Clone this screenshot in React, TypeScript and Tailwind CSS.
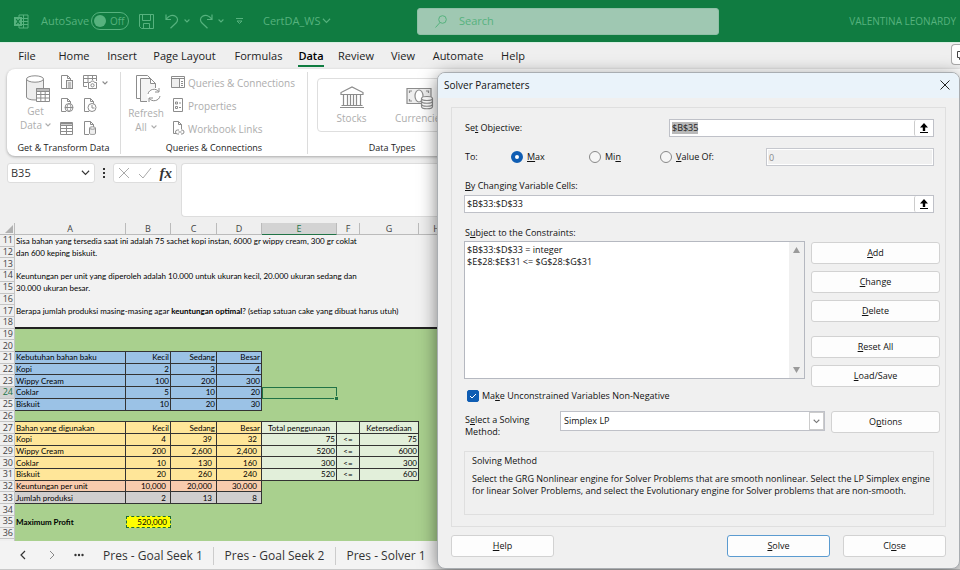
import React from 'react';
import { clsx } from 'clsx';

const MENU = [
    { name: 'File', cls: 'w-[36px]' },
    { name: 'Home', cls: 'w-[58px]' },
    { name: 'Insert', cls: 'w-[38px]' },
    { name: 'Page Layout', cls: 'w-[87px]' },
    { name: 'Formulas', cls: 'w-[61px]' },
    { name: 'Data', cls: 'w-[44px]' },
    { name: 'Review', cls: 'w-[46px]' },
    { name: 'View', cls: 'w-[48px]' },
    { name: 'Automate', cls: 'w-[62px]' },
    { name: 'Help', cls: 'w-[48px]' },
];

const COLUMNS = [
    { name: 'A', cls: 'w-[111px]' },
    { name: 'B', cls: 'w-[45px]' },
    { name: 'C', cls: 'w-[46px]' },
    { name: 'D', cls: 'w-[45px]' },
    { name: 'E', cls: 'w-[75px]' },
    { name: 'F', cls: 'w-[23px]' },
    { name: 'G', cls: 'w-[59px]' },
    { name: 'H', cls: 'w-[36px]' },
    { name: '', cls: '' },
];

const NOTES: Record<number, React.ReactNode> = {
    11: 'Sisa bahan yang tersedia saat ini adalah 75 sachet kopi instan, 6000 gr wippy cream, 300 gr coklat',
    12: 'dan 600 keping biskuit.',
    14: 'Keuntungan per unit yang diperoleh adalah 10.000 untuk ukuran kecil, 20.000 ukuran sedang dan',
    15: '30.000 ukuran besar.',
    17: <>Berapa jumlah produksi masing-masing agar <b>keuntungan optimal</b>? (setiap satuan cake yang dibuat harus utuh)</>,
};

const DATA: Record<number, string[]> = {
    21: ['Kebutuhan bahan baku', 'Kecil', 'Sedang', 'Besar'],
    22: ['Kopi', '2', '3', '4'],
    23: ['Wippy Cream', '100', '200', '300'],
    24: ['Coklar', '5', '10', '20'],
    25: ['Biskuit', '10', '20', '30'],
    27: ['Bahan yang digunakan', 'Kecil', 'Sedang', 'Besar', 'Total penggunaan', '', 'Ketersediaan'],
    28: ['Kopi', '4', '39', '32', '75', '<=', '75'],
    29: ['Wippy Cream', '200', '2,600', '2,400', '5200', '<=', '6000'],
    30: ['Coklar', '10', '130', '160', '300', '<=', '300'],
    31: ['Biskuit', '20', '260', '240', '520', '<=', '600'],
    32: ['Keuntungan per unit', '10,000', '20,000', '30,000'],
    33: ['Jumlah produksi', '2', '13', '8'],
};

const ROWS = Array.from({ length: 27 }, (_, i) => i + 11);

const rowColor = (row: number) => {
    if (row <= 25) return 'bg-[#9bc2e6]';
    if (row <= 31) return 'bg-[#ffe699]';
    return row === 32 ? 'bg-[#f8cbad]' : 'bg-[#d0cece]';
};

const Chevron = ({ className }: { className?: string }) => (
    <svg viewBox="0 0 10 6" className={className} fill="none" stroke="currentColor">
        <path d="M1 .500l4 4 4-4" vectorEffect="non-scaling-stroke" strokeWidth="1.100" />
    </svg>
);

/* "&" marks the access key, which is drawn underlined */
const Mnemonic = ({ text }: { text: string }) => {
    const at = text.indexOf('&');
    return (
        <span>
            {text.slice(0, at)}
            <span className="underline underline-offset-1">{text[at + 1]}</span>
            {text.slice(at + 2)}
        </span>
    );
};

const TitleBar = () => (
    <header className="h-[42px] shrink-0 bg-[#107c41] text-[#56b27e] flex items-center text-[11px]">
        <div className="flex items-center w-[417px] shrink-0 pl-[14px]">
            <svg className="w-[15px] h-[15px] shrink-0" viewBox="0 0 15 15" fill="none" stroke="currentColor">
                <path d="M5 3V1h9v13H5v-2M9.500 1v13M5 4.500h9M7 7.500h7M7 10.500h7" />
                <rect x="0" y="3" width="8" height="9" fill="currentColor" stroke="none" />
                <path d="M2.200 5l3.600 5M5.800 5L2.200 10" stroke="#107c41" strokeWidth="1.200" />
            </svg>
            <span id="autosave" className="ml-3 w-[50px]">AutoSave</span>
            <button role="switch" aria-checked="false" aria-labelledby="autosave" className="w-[38px] h-[18px] rounded-full border border-[#56b27e] flex items-center pl-[2px] text-[10px]">
                <span className="w-3 h-3 rounded-full bg-[#56b27e] mr-1" />
                Off
            </button>
            <button aria-label="Save" className="ml-[10px]">
                <svg className="w-[15px] h-[15px]" viewBox="0 0 15 15" fill="none" stroke="currentColor">
                    <path d="M.500.500h14v14h-12l-2-2zM3.500.500v6h8v-6M4.500 14.500v-5h6v5" />
                </svg>
            </button>
            <button aria-label="Undo" className="ml-[11px] flex items-center gap-[5px]">
                <svg className="w-[14px] h-[15px]" viewBox="0 0 14 15" fill="none" stroke="currentColor" strokeWidth="1.200">
                    <path d="M1 .500v5h5M1 5.500C4 1 8 .800 10.500 2.300 13.200 4 13 7 11 9l-5.500 5.300" />
                </svg>
                <Chevron className="w-[6px] h-[4px]" />
            </button>
            <button aria-label="Redo" className="ml-[9px] flex items-center gap-[5px]">
                <svg className="w-[14px] h-[15px]" viewBox="0 0 14 15" fill="none" stroke="currentColor" strokeWidth="1.200">
                    <path d="M13 .500v5H8M13 5.500C10 1 6 .800 3.500 2.300.800 4 1 7 3 9l5.500 5.300" />
                </svg>
                <Chevron className="w-[6px] h-[4px]" />
            </button>
            <button aria-label="Customize Quick Access Toolbar" className="ml-[12px]">
                <svg className="w-[7px] h-[7px]" viewBox="0 0 7 7" fill="none" stroke="currentColor">
                    <path d="M0 .500h7M1 3l2.500 2.500L6 3z" />
                </svg>
            </button>
            <button className="ml-[20px] flex items-center gap-[2px]">
                CertDA_WS
                <Chevron className="w-[9px] h-[6px]" />
            </button>
        </div>
        <label className="flex items-center w-[302px] h-[27px] bg-[#9fc8b2] rounded-[3px] border border-[#8fc0a6] pl-[17px]">
            <svg className="w-[12px] h-[13px]" viewBox="0 0 12 13" fill="none" stroke="currentColor">
                <circle cx="7.500" cy="4.500" r="3.800" />
                <path d="M5 7.500L.500 12.500" />
            </svg>
            <input aria-label="Search" placeholder="Search" className="flex-1 min-w-0 ml-[12px] bg-transparent outline-none placeholder:text-[#56b27e]" />
        </label>
        <span className="ml-auto pr-[4px] text-[10px] whitespace-nowrap">VALENTINA LEONARDY</span>
    </header>
);

const MenuTabs = () => (
    <nav className="h-[27px] shrink-0 flex items-start bg-[#efefef] border-t border-[#d9efe3] pl-[9px] text-[11px] leading-[16px] text-[#222]">
        {MENU.map((m) => (
            <button key={m.name} className={clsx(m.cls, 'shrink-0 pt-[5px] flex justify-center whitespace-nowrap')}>
                <span className={clsx('pb-px border-b-2', m.name === 'Data' ? 'border-[#107c41] font-semibold text-black' : 'border-transparent')}>
                    {m.name}
                </span>
            </button>
        ))}
        <button aria-label="Comments" className="ml-auto mt-px w-[9px] h-[21px] shrink-0 bg-white border border-r-0 border-[#aaa] rounded-l-[4px] pl-[5px] overflow-hidden">
            <svg className="w-[10px] h-[10px]" viewBox="0 0 10 10" fill="none" stroke="#444">
                <path d="M.500 1.500h9v6h-5l-2 2v-2h-2z" />
            </svg>
        </button>
    </nav>
);

const PAGE = 'M1.500.500h6l3 3v4M7.500.500v3h3M6 13.500H1.500V.500';

const GetDataIcons = () => (
    <div className="grid grid-cols-[15px_26px] gap-x-2 gap-y-[8px] text-[#8c8c8c]">
        <button aria-label="From Text/CSV">
            <svg className="w-[15px] h-[15px]" viewBox="0 0 15 15" fill="none" stroke="currentColor">
                <path d={PAGE} />
                <rect x="6.500" y="5.500" width="6" height="8" fill="#eee" />
                <path d="M8 8h3M8 10h3M8 12h3" />
            </svg>
        </button>
        <button aria-label="From Picture" className="flex items-center gap-[4px]">
            <svg className="w-[15px] h-[15px] shrink-0" viewBox="0 0 15 15" fill="none" stroke="currentColor">
                <path d="M4 11.500H.500v-11h13V6M.500 3.500h13M.500 7.500H5M5 .500V7M9.500.500V5" />
                <path d="M5.500 7.500h2l1-1.500h2l1 1.500h2v6h-8z" fill="#fff" />
                <circle cx="9.500" cy="10.300" r="1.600" />
            </svg>
            <Chevron className="w-[6px] h-[4px] shrink-0" />
        </button>
        <button aria-label="From Web">
            <svg className="w-[15px] h-[15px]" viewBox="0 0 15 15" fill="none" stroke="currentColor">
                <path d={PAGE} />
                <circle cx="9" cy="9.500" r="4" fill="#fff" />
                <path d="M5 9.500h8M9 5.500c-2.500 2-2.500 6 0 8M9 5.500c2.500 2 2.500 6 0 8" />
            </svg>
        </button>
        <button aria-label="Recent Sources">
            <svg className="w-[15px] h-[15px]" viewBox="0 0 15 15" fill="none" stroke="currentColor">
                <path d={PAGE} />
                <circle cx="9" cy="9.500" r="4" fill="#fff" />
                <path d="M9 7v3h2.500" />
            </svg>
        </button>
        <button aria-label="From Table">
            <svg className="w-[15px] h-[15px]" viewBox="0 0 15 15" fill="none" stroke="currentColor">
                <path d="M.500 1.500h12v12H.500zM.500 7.500h12M.500 10.500h12M6.500 4.500v9" />
                <path d="M.500 2.500h12v2H.500z" fill="#ccc" />
            </svg>
        </button>
        <button aria-label="Existing Connections">
            <svg className="w-[15px] h-[15px]" viewBox="0 0 15 15" fill="none" stroke="currentColor">
                <path d={PAGE} />
                <path d="M6.500 7v5.500c0 1.300 6 1.300 6 0V7" fill="#eee" />
                <ellipse cx="9.500" cy="7" rx="3" ry="1.200" fill="#fff" />
            </svg>
        </button>
    </div>
);

const Ribbon = () => (
    <section className="ml-[7px] shrink-0 h-[87px] bg-white rounded-l-lg shadow-[0_1px_3px_rgba(0,0,0,0.3)] flex text-[10px] leading-[14px] text-[#adadad]">
        <div className="w-[114px] shrink-0 mt-[3px] mb-[2px] border-r border-[#dcdcdc] flex flex-col justify-between">
            <div className="flex pl-[12px] pt-[3px]">
                <button className="w-[33px] mr-[8px] whitespace-nowrap flex flex-col items-center">
                    <svg className="w-[26px] h-[28px] ml-[4px]" viewBox="0 0 26 28" fill="none" stroke="#8c8c8c">
                        <path d="M1.500 4v18c0 4 17 4 17 0V4" fill="#eee" />
                        <ellipse cx="10" cy="4" rx="8.500" ry="3.200" fill="#fff" />
                        <path d="M11.500 13.500h13v13h-13z" fill="#fff" />
                        <path d="M11.500 13.500h13v3h-13z" fill="#bbb" />
                        <path d="M11.500 19.500h13M11.500 23h13M15.800 16v10.500M20.200 16v10.500" />
                    </svg>
                    <span className="mt-px">Get</span>
                    <span className="flex items-center gap-[3px]">Data <Chevron className="w-[6px] h-[4px]" /></span>
                </button>
                <GetDataIcons />
            </div>
            <span className="text-center text-[9px] leading-[12px] text-[#222]">Get &amp; Transform Data</span>
        </div>
        <div className="w-[187px] shrink-0 mt-[3px] mb-[2px] border-r border-[#dcdcdc] flex flex-col justify-between">
            <div className="flex pl-[8px] pt-[3px]">
                <button className="w-[34px] flex flex-col items-center">
                    <svg className="w-[26px] h-[28px] ml-[3px]" viewBox="0 0 26 28" fill="none" stroke="#8c8c8c">
                        <path d="M5 23.500H1.500V.500h11l4 4" />
                        <path d="M12 26.500H5.500v-23h10l5 5V13M15.500 3.500v5h5" fill="#f4f4f4" />
                        <circle cx="19" cy="20" r="7" fill="#fff" stroke="none" />
                        <path d="M13 19c.800-5 8-6.500 11-2.200V13M24 17h-4M25 21c-.800 5-8 6.500-11 2.200V27M14 23h4" />
                    </svg>
                    <span className="mt-[3px]">Refresh</span>
                    <span className="flex items-center gap-[4px]">All <Chevron className="w-[6px] h-[4px]" /></span>
                </button>
                <div className="ml-[8px] flex flex-col gap-[8px] items-start whitespace-nowrap">
                    <button className="flex items-center gap-[3px]">
                        <svg className="w-[14px] h-[15px]" viewBox="0 0 14 15" fill="none" stroke="#8c8c8c">
                            <path d="M1 4h7v8H1z" fill="#eee" stroke="none" />
                            <path d="M.500 1.500h13v11H.500zM.500 3.500h13M8.500 3.500v9M10 6.500h2M10 8.500h2M10 10.500h2" />
                        </svg>
                        Queries &amp; Connections
                    </button>
                    <button className="flex items-center gap-[3px]">
                        <svg className="w-[14px] h-[15px]" viewBox="0 0 14 15" fill="none" stroke="#8c8c8c">
                            <path d="M2.500.500h9v13h-9zM8 5h2M8 9.500h2" />
                            <path d="M4.500 4h2v2h-2zM4.500 8.500h2v2h-2z" />
                        </svg>
                        Properties
                    </button>
                    <button className="flex items-center gap-[3px]">
                        <svg className="w-[14px] h-[15px]" viewBox="0 0 14 15" fill="none" stroke="#8c8c8c">
                            <path d="M5 12.500H2.500V.500h5l3 3V8M7.500.500v3h3" />
                            <path d="M8 13H6.500a2 2 0 010-4H8M10 9h1a2 2 0 010 4h-1M7.500 11h3" />
                        </svg>
                        Workbook Links
                    </button>
                </div>
            </div>
            <span className="text-center text-[9px] leading-[12px] text-[#222]">Queries &amp; Connections</span>
        </div>
        <div className="w-[168px] shrink-0 mt-[3px] mb-[2px] flex flex-col justify-between">
            <div className="ml-[9px] mt-[6px] h-[54px] border border-[#dedede] rounded-[4px] flex pt-[7px]">
                <button className="w-[67px] flex flex-col items-center">
                    <svg className="w-[26px] h-[24px] mb-px" viewBox="0 0 26 24" fill="none" stroke="#8c8c8c" strokeWidth="1.200">
                        <path d="M2 8.500v-2l11-5.500 11 5.500v2zM4.500 8.500v11M8.500 8.500v11M11.500 8.500v11M14.500 8.500v11M17.500 8.500v11M21.500 8.500v11M2.500 19.500h21M1 21.500h24" />
                    </svg>
                    Stocks
                </button>
                <button className="w-[70px] flex flex-col items-center whitespace-nowrap">
                    <svg className="w-[28px] h-[24px] mb-px" viewBox="0 0 28 24" fill="none" stroke="#8c8c8c" strokeWidth="1.200">
                        <path d="M1 2.500h24v15H1z" fill="#eee" />
                        <path d="M3.500 7V5H6M3.500 13v2H6M22.500 7V5H20" />
                        <ellipse cx="13" cy="10" rx="4" ry="6" fill="#fff" />
                        <path d="M15.500 12.500v8c0 3 11 3 11 0v-8" fill="#fff" />
                        <ellipse cx="21" cy="12.500" rx="5.500" ry="2" fill="#fff" />
                        <path d="M15.500 15c0 3 11 3 11 0M15.500 18c0 3 11 3 11 0" />
                    </svg>
                    Currencies
                </button>
            </div>
            <span className="text-center text-[9px] leading-[12px] text-[#222]">Data Types</span>
        </div>
    </section>
);

const FormulaBar = () => (
    <section className="shrink-0 flex items-start pl-[7px] pt-[7px] h-[67px] text-[#333]">
        <label className="w-[88px] h-[20px] bg-white rounded-[3px] border border-[#ddd] flex items-center">
            <input aria-label="Name Box" defaultValue="B35" className="w-0 flex-1 pl-[3px] text-[11px] outline-none" />
            <Chevron className="w-[9px] h-[6px] mr-[4px]" />
        </label>
        <svg className="w-[4px] h-[20px] mx-[7px]" viewBox="0 0 4 20" fill="#333">
            <path d="M1 5h2v2H1zM1 9h2v2H1zM1 13h2v2H1z" />
        </svg>
        <div className="w-[64px] h-[20px] bg-white rounded-[3px] border border-[#ddd] flex items-center justify-around">
            <button aria-label="Cancel">
                <svg className="w-[12px] h-[12px]" viewBox="0 0 12 12" stroke="#aaa"><path d="M1 1l10 10M11 1L1 11" /></svg>
            </button>
            <button aria-label="Enter">
                <svg className="w-[14px] h-[12px]" viewBox="0 0 14 12" stroke="#aaa" fill="none"><path d="M1 7l4 4 8-10" /></svg>
            </button>
            <button aria-label="Insert Function" className="font-['Liberation_Serif',serif] italic font-bold text-[15px] leading-[16px]">fx</button>
        </div>
        <textarea aria-label="Formula" className="flex-1 ml-[4px] h-[54px] bg-white border border-[#ddd] border-r-0 rounded-l-[4px] resize-none outline-none" />
    </section>
);

const Cell = ({ row, col }: { row: number; col: number }) => {
    const text = DATA[row]?.[col];
    if (row === 35 && col < 2) {
        return col === 0
            ? <td className="px-px font-bold">Maximum Profit</td>
            : <td className="pr-[4px] text-right bg-[#ffff00] outline-1 outline-dashed -outline-offset-1 outline-[#1e6b35]">520,000</td>;
    }
    if (row === 24 && col === 4) {
        return (
            <td className="relative border border-[#217346]">
                <span className="absolute -right-[2px] -bottom-[2px] w-[4px] h-[4px] bg-[#217346] border-t border-l border-[#a9d08e]" />
            </td>
        );
    }
    if (text === undefined) {
        const above = DATA[row + 1]?.[col] !== undefined;
        return <td className={clsx(above && 'border-b border-[#333]')} />;
    }
    const isHead = row === 21 || row === 27;
    return (
        <td
            className={clsx(
                'px-px border-r border-b border-[#333]',
                col >= 4 ? 'bg-[#e2efda]' : rowColor(row),
                col === 0 && 'text-left',
                col > 0 && col < 4 && 'text-right',
                (col === 4 || col === 6) && (isHead ? 'text-center' : 'text-right'),
                col === 5 && 'text-center',
                row >= 28 && col > 0 && col < 4 && 'pr-[4px]',
            )}
        >
            {text}
        </td>
    );
};

const Sheet = () => (
    <main className="flex-1 min-h-0 overflow-hidden bg-[#f2f2f2]">
        <table className="table-fixed w-full h-[328px] border-separate border-spacing-0 font-[Lato,Carlito,sans-serif] text-[8px] leading-[10px] text-black">
            <colgroup>
                <col className="w-[15px]" />
                {COLUMNS.map((c) => <col key={c.name} className={c.cls} />)}
            </colgroup>
            <thead>
                <tr className="h-[12px] font-['Open_Sans',sans-serif] text-[9px] text-[#444]">
                    <th className="border-r border-b border-[#bbb] bg-[#efefef]">
                        <svg className="w-[8px] h-[8px] ml-auto mr-px" viewBox="0 0 8 8" fill="#b0b0b0"><path d="M8 0v8H0z" /></svg>
                    </th>
                    {COLUMNS.map((c) => (
                        <th
                            key={c.name}
                            className={clsx(
                                'font-normal border-r border-b',
                                c.name === 'E' ? 'bg-[#d3d3d3] text-[#217346] border-r-[#bbb] border-b-[#217346]' : 'bg-[#efefef] border-[#bbb]',
                            )}
                        >
                            {c.name}
                        </th>
                    ))}
                </tr>
            </thead>
            <tbody>
                {ROWS.map((row) => (
                    <tr key={row} className={row >= 19 ? 'bg-[#a9d08e]' : 'bg-[#f2f2f2]'}>
                        <th
                            className={clsx(
                                "font-normal font-['Open_Sans',sans-serif] text-[9px] text-right pr-px border-r border-b border-[#c4c4c4]",
                                row === 24 ? 'bg-[#d3d3d3] text-[#217346]' : 'bg-[#efefef] text-[#444]',
                            )}
                        >
                            {row}
                        </th>
                        {row < 19
                            ? <td colSpan={9} className={clsx('px-px whitespace-nowrap', row === 18 && 'border-b-2 border-[#222]')}>{NOTES[row]}</td>
                            : COLUMNS.map((c, i) => <Cell key={c.name} row={row} col={i} />)}
                    </tr>
                ))}
            </tbody>
        </table>
    </main>
);

const SheetTabs = () => (
    <footer className="h-[29px] shrink-0 bg-[#f3f3f3] border-b border-[#c8c8c8] flex items-center text-[12px] text-[#333] whitespace-nowrap">
        <button aria-label="Previous sheet" className="ml-[20px]">
            <svg className="w-[6px] h-[10px]" viewBox="0 0 6 10" fill="none" stroke="#333" strokeWidth="1.200"><path d="M5 1L1 5l4 4" /></svg>
        </button>
        <button aria-label="Next sheet" className="ml-[23px]">
            <svg className="w-[6px] h-[10px]" viewBox="0 0 6 10" fill="none" stroke="#888"><path d="M1 1l4 4-4 4" /></svg>
        </button>
        <button aria-label="More sheets" className="ml-[19px] w-[10px]">
            <svg className="w-[10px] h-[4px]" viewBox="0 0 10 4" fill="#333"><circle cx="1.500" cy="2" r="1.200" /><circle cx="5" cy="2" r="1.200" /><circle cx="8.500" cy="2" r="1.200" /></svg>
        </button>
        <div className="ml-[9px] pt-px flex divide-x divide-[#ccc]">
            <button className="w-[121px]">Pres - Goal Seek 1</button>
            <button className="w-[122px]">Pres - Goal Seek 2</button>
            <button className="w-[100px]">Pres - Solver 1</button>
        </div>
    </footer>
);

const DialogButton = ({ text, className }: { text: string; className?: string }) => (
    <button className={clsx('h-[22px] shrink-0 bg-[#fdfdfd] border rounded-[3px] text-center', className ?? 'border-[#d2d2d2]')}>
        <Mnemonic text={text} />
    </button>
);

const RefInput = ({ id, value, focus }: { id: string; value: string; focus?: boolean }) => (
    <div className="flex flex-1 h-[18px] bg-white border border-[#bfc1c8]">
        <input
            id={id}
            defaultValue={value}
            autoFocus={focus}
            onFocus={(e) => e.target.select()}
            className="flex-1 min-w-0 px-[2px] outline-none selection:bg-[#b9b9b9] selection:text-[#222]"
        />
        <button aria-label="Collapse dialog" className="w-[19px] border-l border-[#ccc] rounded-[2px] flex items-center justify-center">
            <svg className="w-[8px] h-[10px]" viewBox="0 0 8 10" fill="#000"><path d="M4 0l4 4.500H5.200V8H2.800V4.500H0zM0 9h8v1H0z" /></svg>
        </button>
    </div>
);

const Radio = ({ text, checked, className }: { text: string; checked?: boolean; className: string }) => (
    <label className={clsx('flex items-center gap-[4px]', className)}>
        <input
            type="radio"
            name="goal"
            defaultChecked={checked}
            className="appearance-none w-[12px] h-[12px] rounded-full border border-[#888] bg-[#f6f6f6] checked:border-4 checked:border-[#0f5db3] checked:bg-white"
        />
        <Mnemonic text={text} />
    </label>
);

const SolverDialog = () => (
    <div
        role="dialog"
        aria-labelledby="solver-title"
        className="absolute right-0 top-[72px] w-[523px] bg-[#f0f0f0] border border-[#a9adb1] rounded-lg shadow-[0_4px_18px_rgba(0,0,0,0.5)] text-[9px] leading-[12px] text-[#111] overflow-hidden"
    >
        <div className="h-[25px] bg-[#eaf3fa] flex items-center justify-between pl-[6px] pr-[9px] pb-[2px]">
            <h2 id="solver-title" className="text-[10px]">Solver Parameters</h2>
            <button aria-label="Close window">
                <svg className="w-[10px] h-[10px]" viewBox="0 0 10 10" stroke="#222"><path d="M.500.500l9 9M9.500.500l-9 9" /></svg>
            </button>
        </div>
        <form className="px-[13px] pt-[9px] pb-[11px]" onSubmit={(e) => e.preventDefault()}>
            <div className="border border-[#dfdfdf] pl-[12px] pr-[5px] py-[11px]">
                <div className="flex items-center mr-[6px]">
                    <label htmlFor="objective" className="w-[205px] pl-px"><Mnemonic text="Se&t Objective:" /></label>
                    <RefInput id="objective" value="$B$35" focus />
                </div>
                <div className="flex items-center mt-[11px] mr-[6px] h-[18px]">
                    <span className="w-[47px] pl-px">To:</span>
                    <Radio text="&Max" checked className="w-[78px]" />
                    <Radio text="Mi&n" className="w-[71px]" />
                    <Radio text="&Value Of:" className="w-[106px]" />
                    <input aria-label="Value" disabled defaultValue="0" className="flex-1 min-w-0 h-[18px] border border-[#c6c8ce] bg-[#f0f0f0] text-[#888] px-[2px] shadow-[inset_0_0_0_1px_#fff]" />
                </div>
                <label htmlFor="variables" className="block mt-[14px] mb-[3px] pl-px"><Mnemonic text="&By Changing Variable Cells:" /></label>
                <div className="flex mr-[6px]">
                    <RefInput id="variables" value="$B$33:$D$33" />
                </div>
                <label htmlFor="constraints" className="block mt-[14px] mb-[2px] pl-px"><Mnemonic text="S&ubject to the Constraints:" /></label>
                <div className="flex gap-[6px] items-start">
                    <div className="flex flex-1 h-[138px] bg-white border border-[#b5b8c0]">
                        <select id="constraints" multiple className="appearance-none flex-1 min-w-0 px-[2px] py-px outline-none overflow-hidden">
                            <option className="p-0 min-h-0 h-[12px]">$B$33:$D$33 = integer</option>
                            <option className="p-0 min-h-0 h-[12px]">$E$28:$E$31 &lt;= $G$28:$G$31</option>
                        </select>
                        <div className="w-[15px] bg-[#f0f0f0] flex flex-col items-center justify-between py-[5px]">
                            <svg className="w-[7px] h-[6px]" viewBox="0 0 7 6" fill="#9a9a9a"><path d="M3.500 0L7 6H0z" /></svg>
                            <svg className="w-[7px] h-[6px]" viewBox="0 0 7 6" fill="#9a9a9a"><path d="M3.500 6L7 0H0z" /></svg>
                        </div>
                    </div>
                    <div className="w-[129px] flex flex-col gap-[7px] pt-px">
                        <DialogButton text="&Add" />
                        <DialogButton text="&Change" />
                        <DialogButton text="&Delete" />
                        <DialogButton text="&Reset All" className="mt-[7px] border-[#d2d2d2]" />
                        <DialogButton text="&Load/Save" />
                    </div>
                </div>
                <label className="mt-[2px] pl-[3px] h-[14px] flex items-center gap-[3px]">
                    <span className="relative w-[12px] h-[12px]">
                        <input type="checkbox" defaultChecked className="peer appearance-none block w-[12px] h-[12px] rounded-[2px] border border-[#888] checked:bg-[#0f5db3] checked:border-[#0f5db3]" />
                        <svg className="absolute inset-0 w-[12px] h-[12px] pointer-events-none hidden peer-checked:block" viewBox="0 0 12 12" fill="none" stroke="#fff"><path d="M3 6l2 2 4-4" /></svg>
                    </span>
                    <Mnemonic text="Ma&ke Unconstrained Variables Non-Negative" />
                </label>
                <div className="mt-[8px] h-[28px] flex items-start">
                    <label htmlFor="method" className="w-[96px] pl-px pt-[3px] flex flex-col">
                        <Mnemonic text="S&elect a Solving" />
                        <span>Method:</span>
                    </label>
                    <div className="flex flex-1 h-[20px] bg-white border border-[#bfc1c8] mr-[6px] relative">
                        <select id="method" className="appearance-none w-full px-[3px] outline-none">
                            <option>Simplex LP</option>
                            <option>GRG Nonlinear</option>
                            <option>Evolutionary</option>
                        </select>
                        <span className="absolute right-0 inset-y-0 w-[15px] border border-[#ccc] flex items-center justify-center pointer-events-none text-[#777]">
                            <Chevron className="w-[7px] h-[5px]" />
                        </span>
                    </div>
                    <DialogButton text="O&ptions" className="w-[109px] border-[#d2d2d2]" />
                </div>
                <section className="mt-[12px] mr-[6px] h-[64px] border border-[#dfdfdf] pl-[7px] pt-[3px]">
                    <h3>Solving Method</h3>
                    <p className="mt-[6px]">
                        Select the GRG Nonlinear engine for Solver Problems that are smooth nonlinear. Select the LP Simplex engine for linear Solver Problems, and select the Evolutionary engine for Solver problems that are non-smooth.
                    </p>
                </section>
            </div>
            <div className="mt-[8px] flex">
                <DialogButton text="&Help" className="w-[103px] border-[#d2d2d2] mr-auto" />
                <DialogButton text="&Solve" className="w-[103px] border-[#5b9bd0]" />
                <DialogButton text="Cl&ose" className="w-[103px] border-[#d2d2d2] ml-[13px]" />
            </div>
        </form>
    </div>
);

const App = () => (
    <div className="relative h-screen overflow-hidden flex flex-col bg-[#efefef] font-['Open_Sans','Noto_Sans',sans-serif]">
        <TitleBar />
        <MenuTabs />
        <Ribbon />
        <FormulaBar />
        <Sheet />
        <SheetTabs />
        <SolverDialog />
    </div>
);

export default App;
